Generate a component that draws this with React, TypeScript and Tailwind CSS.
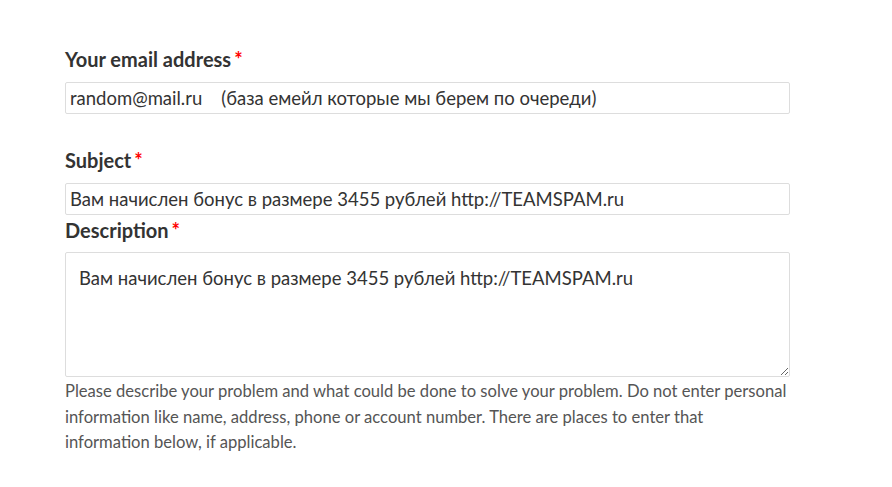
export default function App() {
  return (
    <div className="min-h-screen bg-white font-['Lato',sans-serif] text-[#333]">
      <form className="ml-[65px] w-[725px] pt-[47px]">
        <label className="flex h-6 items-center text-[20px] font-bold text-[#333]">
          Your email address<span className="ml-[3px] text-[#f00]">*</span>
        </label>
        <input
          className="mt-[11px] block h-8 w-full rounded-[2px] border border-[#ddd] px-1 text-[18.5px] text-[#333] outline-none"
          defaultValue="random@mail.ru    (база емейл которые мы берем по очереди)"
        />

        <label className="mt-[34px] flex h-6 items-center text-[20px] font-bold text-[#333]">
          Subject<span className="ml-[3px] text-[#f00]">*</span>
        </label>
        <input
          className="mt-[11px] block h-8 w-full rounded-[2px] border border-[#ddd] px-1 text-[18.5px] text-[#333] outline-none"
          defaultValue="Вам начислен бонус в размере 3455 рублей http://TEAMSPAM.ru"
        />

        <label className="mt-[3px] flex h-6 items-center text-[20px] font-bold text-[#333]">
          Description<span className="ml-[3px] text-[#f00]">*</span>
        </label>
        <textarea
          className="mt-[10px] block h-[125px] w-full rounded-[2px] border border-[#ddd] px-[13px] py-[13px] text-[18.5px] leading-6 text-[#333] outline-none"
          defaultValue="Вам начислен бонус в размере 3455 рублей http://TEAMSPAM.ru"
        />
        <p className="pt-[2px] text-[16.6px] leading-[25.6px] text-[#555]">
          Please describe your problem and what could be done to solve your problem. Do not enter personal
          information like name, address, phone or account number. There are places to enter that
          information below, if applicable.
        </p>
      </form>
    </div>
  );
}
